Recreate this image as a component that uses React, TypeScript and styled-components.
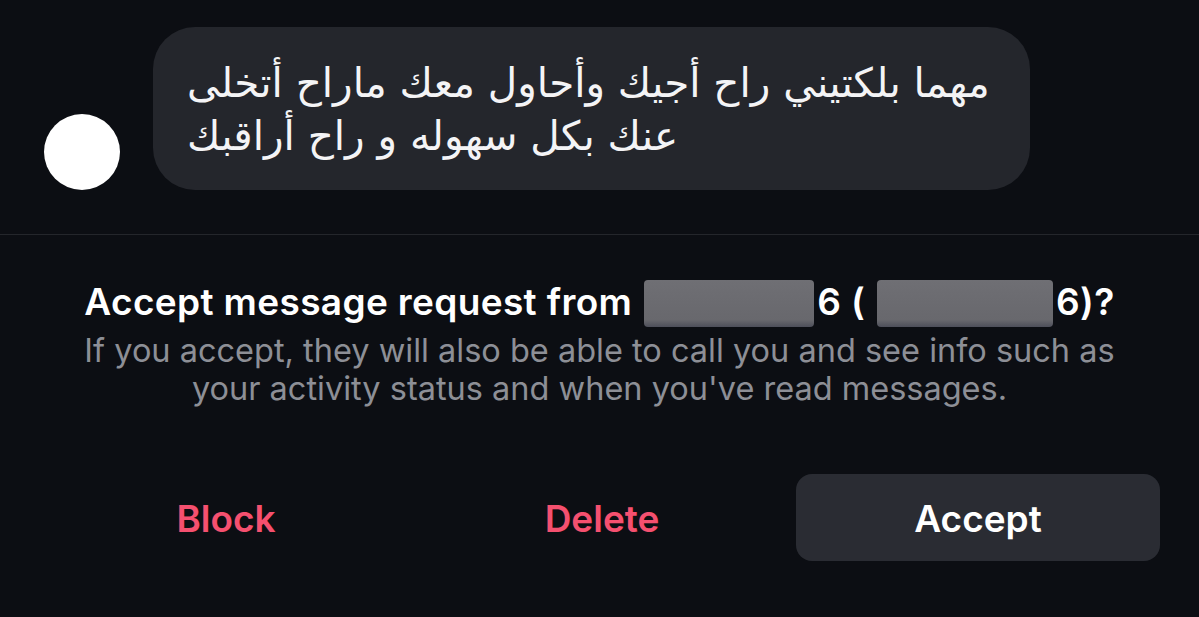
import React from 'react'
import styled, { createGlobalStyle } from 'styled-components'

const Global = createGlobalStyle`
  html, body {
    margin: 0;
    padding: 0;
    background: #0c0e13;
  }
  body {
    font-family: 'Inter', 'Liberation Sans', sans-serif;
    color: #fff;
  }
`;

const Page = styled.div`
  width: 1199px;
  height: 617px;
  background: #0c0e13;
  overflow: hidden;
`;

const Thread = styled.div`
  height: 235px;
  box-sizing: border-box;
  border-bottom: 1px solid #24262b;
  padding: 27px 0 0 44px;
`;

const MessageRow = styled.div`
  display: flex;
  align-items: flex-end;
  gap: 33px;
`;

const Avatar = styled.div`
  width: 76px;
  height: 76px;
  border-radius: 50%;
  background: #fff;
  flex-shrink: 0;
`;

const Bubble = styled.div`
  width: 877px;
  height: 163px;
  box-sizing: border-box;
  background: #24262c;
  border-radius: 42px;
  padding: 30px 40px 0 34px;
`;

const BubbleText = styled.p`
  margin: 0;
  direction: rtl;
  text-align: left;
  font-family: 'DejaVu Sans', 'Noto Sans', sans-serif;
  font-size: 40.5px;
  line-height: 53px;
  color: #f4f4f6;
`;

const Request = styled.div`
  padding-top: 42px;
  text-align: center;
`;

const Title = styled.h1`
  margin: 0;
  font-size: 37px;
  font-weight: 600;
  line-height: 50px;
  color: #fff;
  letter-spacing: 0.35px;
`;

const Redacted = styled.span<{ $w: number }>`
  display: inline-block;
  width: ${p => p.$w}px;
  height: 47px;
  vertical-align: -12px;
  border-radius: 4px;
  background: linear-gradient(180deg, #6f6f74 0%, #68686d 85%, #4d4f5a 100%);
  margin: 0 3px 0 12px;
`;

const Info = styled.p`
  margin: 5px 0 0;
  font-size: 32.5px;
  line-height: 38px;
  color: #8d8f96;
`;

const Actions = styled.div`
  display: grid;
  grid-template-columns: repeat(3, 364px);
  gap: 12px;
  padding: 66px 0 0 44px;
`;

const Action = styled.button<{ $filled?: boolean }>`
  height: 87px;
  padding: 2px 0 0;
  border: none;
  border-radius: 16px;
  background: ${p => (p.$filled ? '#2a2c33' : 'transparent')};
  color: ${p => (p.$filled ? '#ffffff' : '#f5506f')};
  font-family: 'Inter', 'Liberation Sans', sans-serif;
  font-size: 37px;
  font-weight: 600;
  cursor: pointer;
`;

export default function App() {
  return (
    <Page>
      <Global />
      <Thread>
        <MessageRow>
          <Avatar />
          <Bubble>
            <BubbleText>
              مهما بلكتيني راح أجيك وأحاول معك ماراح أتخلى
              <br />
              عنك بكل سهوله و راح أراقبك
            </BubbleText>
          </Bubble>
        </MessageRow>
      </Thread>
      <Request>
        <Title>
          Accept message request from<Redacted $w={170} />6 (<Redacted $w={176} />6)?
        </Title>
        <Info>
          If you accept, they will also be able to call you and see info such as
          <br />
          your activity status and when you've read messages.
        </Info>
      </Request>
      <Actions>
        <Action>Block</Action>
        <Action>Delete</Action>
        <Action $filled>Accept</Action>
      </Actions>
    </Page>
  )
}
